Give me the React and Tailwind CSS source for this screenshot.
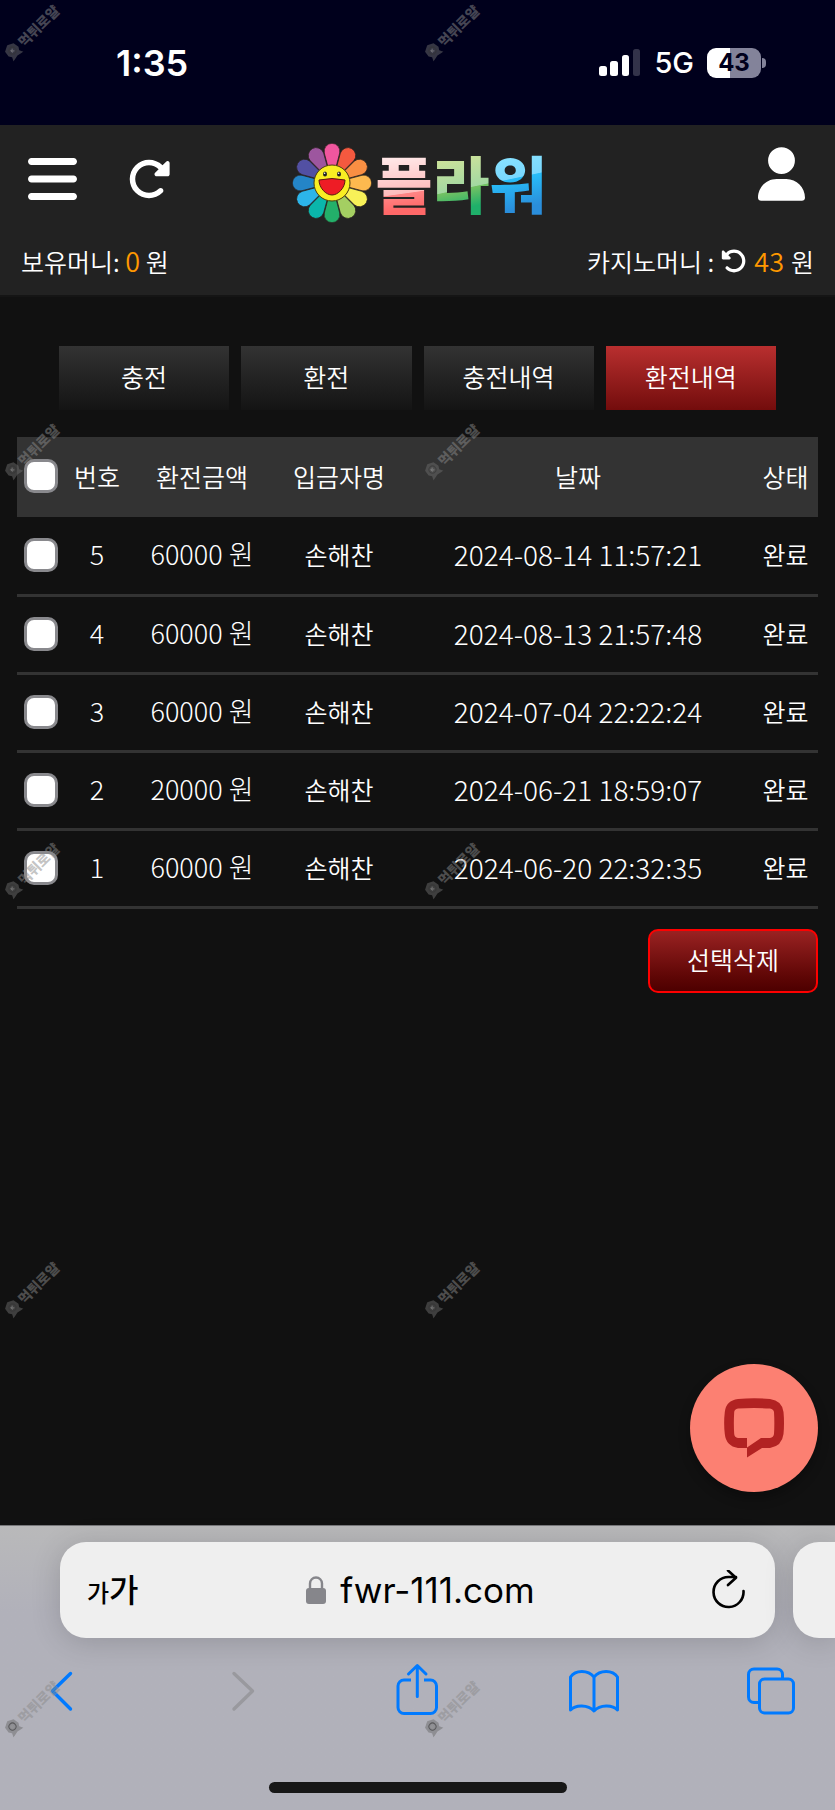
import { FaBars, FaRotateLeft, FaRotateRight, FaUser } from "react-icons/fa6";

const tabs = ["충전", "환전", "충전내역", "환전내역"];

const rows = [
  { id: 5, amount: "60000 원", name: "손해찬", date: "2024-08-14 11:57:21", status: "완료" },
  { id: 4, amount: "60000 원", name: "손해찬", date: "2024-08-13 21:57:48", status: "완료" },
  { id: 3, amount: "60000 원", name: "손해찬", date: "2024-07-04 22:22:24", status: "완료" },
  { id: 2, amount: "20000 원", name: "손해찬", date: "2024-06-21 18:59:07", status: "완료" },
  { id: 1, amount: "60000 원", name: "손해찬", date: "2024-06-20 22:32:35", status: "완료" },
];

const petals = [
  "#f0569e", "#f4593f", "#f98f43", "#fdb94f", "#f8f158", "#a4cf62",
  "#23b06a", "#0ab6ab", "#2cb5ea", "#2485c7", "#5250a3", "#9d569f",
];

function StatusBar() {
  return (
    <div className="flex h-[125px] items-center justify-between bg-[#00001c] pl-[116px] pr-[69px] font-['Inter',sans-serif] text-white">
      <span className="text-[36px] font-semibold leading-none">1:35</span>
      <div className="flex items-center gap-[13px]">
        <svg width="42" height="27" viewBox="0 0 42 27" fill="#fff" aria-hidden="true">
          <rect x="0" y="17" width="8" height="10" rx="2.5" />
          <rect x="11" y="12" width="8" height="15" rx="2.5" />
          <rect x="23" y="6" width="7" height="21" rx="2.5" />
          <rect x="34" y="0" width="7" height="27" rx="2.5" fill="#33334a" />
        </svg>
        <span className="text-[29px] font-medium leading-none">5G</span>
        <div className="flex items-center gap-px">
          <span className="flex h-[30px] w-[54px] items-center justify-center rounded-[9px] bg-linear-to-r from-white from-43% to-[#83839a] to-43% text-[24px] font-bold leading-none text-[#00001c]">
            43
          </span>
          <span className="h-[10px] w-[4px] rounded-r-full bg-[#83839a]" />
        </div>
      </div>
    </div>
  );
}

function Flower() {
  return (
    <svg width="80" height="80" viewBox="-40 -40 80 80" aria-hidden="true">
      {petals.map((color, i) => (
        <path
          key={color}
          d="M-4 -16L-7.7 -30A7.9 7.9 0 1 1 7.7 -30L4 -16Z"
          fill={color}
          stroke="#2a2320"
          strokeWidth="0.7"
          transform={`rotate(${i * 30})`}
        />
      ))}
      <circle r="18" fill="#f9ee23" stroke="#4a3c10" strokeWidth="1" />
      <ellipse cx="-7" cy="-9" rx="2" ry="2.5" fill="#222" />
      <ellipse cx="7" cy="-9" rx="2" ry="2.5" fill="#222" />
      <circle cx="-7.4" cy="-9.8" r="0.8" fill="#fff" />
      <circle cx="6.6" cy="-9.8" r="0.8" fill="#fff" />
      <path d="M-13 -3Q0 -6 13 -3C13 5 6 12 0 12S-13 5 -13 -3Z" fill="#ee1c25" stroke="#5a1a10" strokeWidth="1" />
    </svg>
  );
}

function Logo() {
  return (
    <a href="#home" className="flex items-center gap-[3px] pl-[6px]">
      <Flower />
      <span className="flex pb-[2px] text-[62px] font-black leading-[72px]">
        <span className="bg-[linear-gradient(172deg,#ffe6e6_20%,#ffbcbc_64%,#ff8585_65%,#ff6868_85%)] bg-clip-text text-transparent">플</span>
        <span className="bg-[linear-gradient(168deg,#cbe29b_20%,#a3d8a2_58%,#74c163_59%,#1fb06a_82%)] bg-clip-text text-transparent">라</span>
        <span className="bg-[linear-gradient(168deg,#86e0ff_20%,#79d8ff_44%,#28bdf8_45%,#2a8edb_82%)] bg-clip-text text-transparent">워</span>
      </span>
    </a>
  );
}

function Header() {
  return (
    <header className="border-b-2 border-[#151515] bg-[#222222] pb-[14px] text-white">
      <div className="grid h-[115px] grid-cols-[1fr_auto_1fr] items-center pl-[28px] pr-[30px]">
        <div className="flex items-center gap-[50px] pb-[7px]">
          <button type="button" aria-label="메뉴">
            <FaBars className="h-[56px] w-[49px]" />
          </button>
          <button type="button" aria-label="새로고침">
            <FaRotateRight className="size-[44px]" />
          </button>
        </div>
        <Logo />
        <a href="#mypage" aria-label="마이페이지" className="justify-self-end pb-[18px]">
          <FaUser className="h-[54px] w-[47px]" />
        </a>
      </div>
      <div className="flex h-[41px] items-center justify-between px-[21px]">
        <p>
          보유머니: <span className="text-[27px] text-[#ff9800]">0</span> 원
        </p>
        <p className="flex items-center gap-[7px]">
          카지노머니 :
          <button type="button" aria-label="카지노머니 새로고침">
            <FaRotateLeft className="size-[26px]" />
          </button>
          <span className="text-[27px] text-[#ff9800]">43</span> 원
        </p>
      </div>
    </header>
  );
}

function Checkbox({ label }) {
  return (
    <input
      type="checkbox"
      aria-label={label}
      className="block size-[34px] appearance-none rounded-[10px] border-3 border-[#89898d] bg-white"
    />
  );
}

function HistoryTable() {
  return (
    <table className="w-full table-fixed border-collapse text-center">
      <colgroup>
        <col className="w-[48px]" />
        <col className="w-[64px]" />
        <col className="w-[146px]" />
        <col className="w-[128px]" />
        <col />
        <col className="w-[65px]" />
      </colgroup>
      <thead className="bg-[#333333]">
        <tr className="h-[80px]">
          <th className="px-[7px] pb-[2px]"><Checkbox label="전체 선택" /></th>
          <th className="pb-[2px] font-[350]">번호</th>
          <th className="pb-[2px] font-[350]">환전금액</th>
          <th className="pb-[2px] font-[350]">입금자명</th>
          <th className="pb-[2px] font-[350]">날짜</th>
          <th className="pb-[2px] font-[350]">상태</th>
        </tr>
      </thead>
      <tbody>
        {rows.map((row) => (
          <tr key={row.id} className="h-[78px] border-b-3 border-[#333333]">
            <td className="px-[7px]"><Checkbox label={`${row.id}번 선택`} /></td>
            <td className="pb-[2px] text-[27px] font-light">{row.id}</td>
            <td className="pb-[2px] text-[27px] font-light">{row.amount}</td>
            <td className="pb-[2px]">{row.name}</td>
            <td className="pb-[2px] text-[28px] font-light">{row.date}</td>
            <td className="pb-[2px]">{row.status}</td>
          </tr>
        ))}
      </tbody>
    </table>
  );
}

function BrowserBar() {
  return (
    <footer className="border-t border-[#77777a] bg-linear-to-b from-[#b9b9ba] to-[#b1b1ba] to-30% pt-[16px] pb-[17px] text-black">
      <div className="flex gap-[18px] overflow-x-clip pl-[60px]">
        <div className="grid h-[96px] flex-1 grid-cols-[1fr_auto_1fr] items-center rounded-[26px] bg-[#efefef] px-[27px] shadow-[0_4px_30px_rgba(0,0,0,0.16)]">
          <button type="button" aria-label="페이지 설정" className="flex items-baseline justify-self-start pb-[4px] font-medium leading-none">
            <span className="text-[24px]">가</span>
            <span className="text-[32px]">가</span>
          </button>
          <div className="flex items-center gap-[14px] pl-[6px]">
            <svg width="20" height="28" viewBox="0 0 20 28" aria-hidden="true">
              <path d="M4 13V7.5a6 6 0 0 1 12 0V13" fill="none" stroke="#86868b" strokeWidth="2.4" />
              <rect x="0" y="12" width="20" height="16" rx="3" fill="#86868b" />
            </svg>
            <span className="font-['Inter',sans-serif] text-[35px] font-normal leading-none">fwr-111.com</span>
          </div>
          <button type="button" aria-label="새로고침" className="justify-self-end">
            <svg width="40" height="40" viewBox="0 0 40 40" fill="none" stroke="#000" strokeWidth="2.6" strokeLinecap="round" strokeLinejoin="round">
              <path d="M35.500 19.500A15 15 0 1 1 20.500 5.500H28M20 -1L28 6.200L20 13.500" transform="translate(0 1.500)" />
            </svg>
          </button>
        </div>
        <div className="w-[42px] rounded-l-[26px] bg-[#efefef] shadow-[0_4px_30px_rgba(0,0,0,0.16)]" />
      </div>
      <nav className="mt-[22px] flex justify-between pl-[35px] pr-[38px] text-[#007aff]">
        <button type="button" aria-label="뒤로">
          <svg width="52" height="60" viewBox="0 0 52 60" fill="none" stroke="currentColor" strokeWidth="3.4" strokeLinecap="round" strokeLinejoin="round">
            <path d="M35.500 13.500L17.500 31L35.500 49" />
          </svg>
        </button>
        <button type="button" aria-label="앞으로" className="text-[#99999e]">
          <svg width="52" height="60" viewBox="0 0 52 60" fill="none" stroke="currentColor" strokeWidth="3.4" strokeLinecap="round" strokeLinejoin="round">
            <path d="M21 13.500L39.500 31L21 49" />
          </svg>
        </button>
        <button type="button" aria-label="공유">
          <svg width="52" height="60" viewBox="0 0 52 60" fill="none" stroke="currentColor" strokeWidth="3" strokeLinecap="round" strokeLinejoin="round">
            <path d="M21 20H14a6 6 0 0 0-6 6V47.500a6 6 0 0 0 6 6H40.500a6 6 0 0 0 6-6V26a6 6 0 0 0-6-6H34" strokeLinecap="butt" />
            <path d="M27.300 36.500V6M18.500 14L27.300 5.500L36 14" />
          </svg>
        </button>
        <button type="button" aria-label="책갈피">
          <svg width="52" height="60" viewBox="0 0 52 60" fill="none" stroke="currentColor" strokeWidth="3" strokeLinecap="round" strokeLinejoin="round">
            <path d="M26 17C20 9.500 7.500 9.500 2.500 17V50C7.500 44.500 20 44.500 26 51C32 44.500 44.500 44.500 49.500 50V17C44.500 9.500 32 9.500 26 17V50" />
          </svg>
        </button>
        <button type="button" aria-label="탭">
          <svg width="52" height="60" viewBox="0 0 52 60" fill="none" stroke="currentColor" strokeWidth="3" strokeLinecap="round" strokeLinejoin="round">
            <path d="M13 42.500H9a5.500 5.500 0 0 1-5.500-5.500V14.500A5.500 5.500 0 0 1 9 9H32a5.500 5.500 0 0 1 5.500 5.500V19" strokeLinecap="butt" />
            <rect x="14.500" y="19" width="34" height="34" rx="5" />
          </svg>
        </button>
      </nav>
      <div className="mx-auto mt-[62px] h-[11px] w-[298px] rounded-full bg-[#171717]" />
    </footer>
  );
}

// repeated diagonal marks over the whole page
function Watermarks() {
  return (
    <div className="pointer-events-none absolute inset-0 grid auto-rows-[419px] grid-cols-[420px_420px] overflow-hidden" aria-hidden="true">
      {Array.from({ length: 10 }, (_, i) => (
        <div key={i} className="flex size-[64px] items-center justify-center">
          <div className="flex -rotate-45 items-center gap-[2px] text-[14px] font-black leading-none text-[#8a8a8a]/50">
            <svg width="16" height="16" viewBox="0 0 16 16">
              <path d="M8 0L14 3L15 9L13 12L15 16L8 14.500L1 16L3 12L1 9L2 3Z" fill="#6b6b6b" fillOpacity="0.5" />
              <circle cx="8" cy="7.500" r="3.500" fill="none" stroke="#333" strokeOpacity="0.6" />
              <path d="M6.800 6V9M9.200 6L7 7.500L9.200 9" stroke="#999" strokeOpacity="0.6" fill="none" />
            </svg>
            <span className="whitespace-nowrap">먹튀로얄</span>
          </div>
        </div>
      ))}
    </div>
  );
}

export default function App() {
  return (
    <div className="relative flex min-h-screen flex-col bg-[#111111] font-['Noto_Sans_CJK_KR',sans-serif] text-[25px] font-[350] leading-[36px] text-white">
      <StatusBar />
      <Header />
      <main className="flex flex-1 flex-col px-[17px] pt-[49px] pb-[33px]">
        <nav className="mx-[42px] grid grid-cols-4 gap-[12px]">
          {tabs.map((tab) => (
            <a
              key={tab}
              href={`#${tab}`}
              className={`flex h-[64px] items-center justify-center bg-linear-to-b pb-[4px] ${
                tab === "환전내역" ? "from-[#b92f2f] to-[#730c0c]" : "from-[#333333] to-[#141414]"
              }`}
            >
              {tab}
            </a>
          ))}
        </nav>
        <div className="mt-[27px]">
          <HistoryTable />
        </div>
        <button
          type="button"
          className="mt-[20px] h-[64px] w-[170px] self-end rounded-[10px] border-2 border-[#ff0000] bg-linear-to-b from-[#9a2222] to-[#4d0000] pb-[4px]"
        >
          선택삭제
        </button>
        <button
          type="button"
          aria-label="채팅 상담"
          className="mt-auto flex size-[128px] items-center justify-center self-end rounded-full bg-[#fc8072] shadow-[0_6px_12px_rgba(0,0,0,0.3)]"
        >
          <svg width="60" height="60" viewBox="0 0 60 60" fill="#b22222">
            <path fillRule="evenodd" d="M14 1Q30 -0.500 46 1Q58 2.500 59.500 14Q60.500 25 59.500 36Q58 48 46 50H38L23 59.500V50H14Q2 48 0.800 36Q-0.500 25 0.800 14Q2 2.500 14 1ZM14 10.500Q10.500 11 10.200 14Q9.500 25 10.200 36Q10.500 39.500 14 40H23V49.500L37 40H46Q49.500 39.500 50 36Q50.700 25 50 14Q49.500 11 46 10.500Q30 9.500 14 10.500Z" />
          </svg>
        </button>
      </main>
      <BrowserBar />
      <Watermarks />
    </div>
  );
}
